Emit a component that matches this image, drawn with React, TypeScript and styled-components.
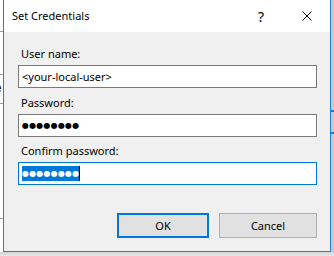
import React from "react";
import styled, { createGlobalStyle } from "styled-components";

const Global = createGlobalStyle`
  html, body { margin: 0; padding: 0; background: #ffffff; }
  #root { width: 334px; height: 256px; }
`;

const UI = `"Noto Sans", "Open Sans", sans-serif`;

const Screen = styled.div`
  width: 334px;
  height: 256px;
  overflow: hidden;
  display: grid;
  grid-template-columns: 3px 328px 3px;
  grid-template-rows: 252px 4px;
  background: #ffffff;
  font-family: ${UI};
`;

const LeftStrip = styled.div`
  background: #ffffff;
  overflow: hidden;
  display: flex;
  flex-direction: column;
  font-family: "Liberation Sans", sans-serif;
  font-size: 12px;
  line-height: 14px;
`;

const Fragment = styled.div<{ $color?: string; $top: number }>`
  margin-top: ${(p) => p.$top}px;
  height: 14px;
  white-space: nowrap;
  color: ${(p) => p.$color ?? "#222"};
  margin-left: -5px;
`;

const Rule = styled.div<{ $top: number }>`
  margin-top: ${(p) => p.$top}px;
  height: 1px;
  background: #a0a0a0;
`;

const RightStrip = styled.div`
  background: #c8c8c8;
  display: flex;
  flex-direction: column;
`;

const Tick = styled.div<{ $top: number }>`
  margin-top: ${(p) => p.$top}px;
  height: 2px;
  background: #2a78c8;
`;

const BottomStrip = styled.div`
  grid-column: 1 / 4;
  background: linear-gradient(#d4d4d4, #e6e6e6);
`;

const Dialog = styled.div`
  border: 1px solid #1883d7;
  border-top: none;
  background: #f0f0f0;
  display: flex;
  flex-direction: column;
  box-sizing: border-box;
  height: 252px;
`;

const TitleBar = styled.div`
  height: 32px;
  background: #ffffff;
  display: flex;
  align-items: center;
  flex-shrink: 0;
`;

const Title = styled.div`
  flex: 1;
  padding-left: 8px;
  font-size: 11px;
  color: #000;
  padding-bottom: 1px;
`;

const CaptionButton = styled.div`
  width: 46px;
  height: 32px;
  display: flex;
  align-items: center;
  justify-content: center;
  font-size: 14px;
  color: #000;
`;

const Body = styled.div`
  flex: 1;
  display: flex;
  flex-direction: column;
  padding: 14px 13px 0 14px;
`;

const Label = styled.div<{ $gap: number }>`
  margin-top: ${(p) => p.$gap}px;
  font-size: 11px;
  line-height: 16px;
  color: #000;
  padding-left: 3px;
`;

const Field = styled.div<{ $focused?: boolean }>`
  margin-top: 3px;
  height: 23px;
  box-sizing: border-box;
  background: #ffffff;
  border: 1px solid ${(p) => (p.$focused ? "#0078d7" : "#7a7a7a")};
  display: flex;
  align-items: center;
  padding-left: 3px;
  font-size: 11px;
  color: #000;
`;

const Dots = styled.span<{ $selected?: boolean }>`
  font-family: "DejaVu Sans", sans-serif;
  font-size: 8px;
  letter-spacing: 0.2px;
  line-height: 15px;
  color: ${(p) => (p.$selected ? "#ffffff" : "#000000")};
  background: ${(p) => (p.$selected ? "#0078d7" : "transparent")};
`;

const Caret = styled.span`
  width: 1px;
  height: 15px;
  background: #000;
`;

const Buttons = styled.div`
  margin-top: 28px;
  display: flex;
  justify-content: flex-end;
  gap: 10px;
`;

const Button = styled.div<{ $default?: boolean; $w: number }>`
  width: ${(p) => p.$w}px;
  height: 25px;
  box-sizing: border-box;
  background: #e1e1e1;
  border: ${(p) => (p.$default ? "2px solid #0078d7" : "1px solid #adadad")};
  display: flex;
  align-items: center;
  justify-content: center;
  font-size: 11px;
  color: #000;
`;

export default function App() {
  return (
    <>
      <Global />
      <Screen>
        <LeftStrip>
          <Fragment $top={5} $color="#7a1020">r</Fragment>
          <Rule $top={12} />
          <Rule $top={42} />
          <Fragment $top={6}>e</Fragment>
          <Rule $top={8} />
          <Fragment $top={40} $color="#8a1a20">l</Fragment>
          <Rule $top={60} />
        </LeftStrip>
        <Dialog>
          <TitleBar>
            <Title>Set Credentials</Title>
            <CaptionButton>?</CaptionButton>
            <CaptionButton>
              <svg width="10" height="10" viewBox="0 0 10 10">
                <path d="M0.5 0.5 L9.5 9.5 M9.5 0.5 L0.5 9.5" stroke="#000" strokeWidth="1" />
              </svg>
            </CaptionButton>
          </TitleBar>
          <Body>
            <Label $gap={0}>User name:</Label>
            <Field>&lt;your-local-user&gt;</Field>
            <Label $gap={7}>Password:</Label>
            <Field>
              <Dots>●●●●●●●●</Dots>
            </Field>
            <Label $gap={6}>Confirm password:</Label>
            <Field $focused>
              <Dots $selected>●●●●●●●●</Dots>
              <Caret />
            </Field>
            <Buttons>
              <Button $default $w={92}>OK</Button>
              <Button $w={98}>Cancel</Button>
            </Buttons>
          </Body>
        </Dialog>
        <RightStrip>
          <Tick $top={110} />
          <Tick $top={20} />
        </RightStrip>
        <BottomStrip />
      </Screen>
    </>
  );
}
